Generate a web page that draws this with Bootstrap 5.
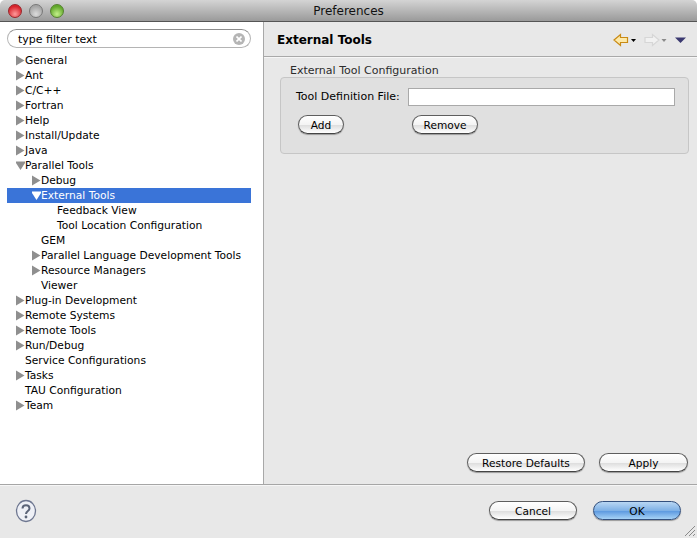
<!DOCTYPE html>
<html lang="en">
<head>
    <title>Preferences</title>
    <link rel="stylesheet" href="https://cdn.jsdelivr.net/npm/bootstrap@5.3.0/dist/css/bootstrap.min.css">
    <script src="https://cdn.jsdelivr.net/npm/bootstrap@5.3.0/dist/js/bootstrap.bundle.min.js"></script>
    <style>
        html, body { height: 538px; overflow: hidden; background: #fff; }
        body { font-family: "DejaVu Sans", sans-serif; font-size: 10.7px; color: #000; }
        .win { width: 697px; height: 538px; }
        .titlebar { height: 22px; background: linear-gradient(#d4d4d4, #9a9a9a); border-bottom: 1px solid #555; border-radius: 5px 5px 0 0; position: relative; }
        .titlebar-text { font-size: 12px; color: #111; line-height: 20px; padding-top: 1px; text-align: center; }
        .light { position: absolute; top: 4px; width: 14px; height: 14px; border-radius: 50%; border: 1px solid #777; }
        .light-red { left: 8px; background: radial-gradient(circle at 50% 75%, #ff9a9a, #d8242c 70%); border-color: #99252a; }
        .light-grey { left: 29px; background: radial-gradient(circle at 50% 75%, #dcdcdc, #a6a6a6 70%); }
        .light-green { left: 50px; background: radial-gradient(circle at 50% 75%, #c4f08a, #62a82c 70%); border-color: #55812f; }
        .main { height: 462px; }
        .left-pane { background: #fff; border-right: 1px solid #a8a8a8; box-sizing: content-box; padding: 7px 0 0 7px; width: 256px; }
        .search-box { width: 244px; height: 19px; border: 1px solid #b4b4b4; border-top-color: #8c8c8c; border-radius: 10px; padding: 1px 5px 0 10px; font-size: 11px; line-height: 17px; background: #fff; }
        .clear-x { width: 12px; height: 12px; background: #b5b5b5; border-radius: 50%; color: #fff; margin-top: -1px; }
        .tree { margin: 5px 0 0; padding: 0; list-style: none; width: 244px; }
        .tree li { height: 15px; line-height: 15px; white-space: nowrap; display: flex; align-items: center; }
        .lv0 { padding-left: 9px; }
        .lv1 { padding-left: 25px; }
        .lv2 { padding-left: 50px; }
        .tw { width: 9px; height: 11px; flex: none; display: block; }
        .tw-none { width: 9px; flex: none; }
        .tree li.sel { background: #3a74d8; color: #fff; }
        .right-pane { width: 433px; background: #e8e8e8; }
        .page-head { height: 35px; border-bottom: 1px solid #a9a9a9; box-shadow: 0 1px 0 #f6f6f6; padding: 2px 11px 0 13px; }
        .page-title { font-size: 12px; font-weight: 700; }
        .group-wrap { padding: 7px 8px 0 16px; }
        .group-label { padding-left: 10px; line-height: 13px; color: #2c2c2c; font-size: 11px; }
        .group-box { height: 77px; background: #e0e0e0; border: 1px solid #c6c6c6; border-radius: 4px; padding: 10px 13px 0 15px; }
        .field-label { width: 112px; font-size: 11px; }
        .field-input { width: 268px; height: 18px; border-radius: 0; padding: 0 3px; border: 1px solid #a9a9a9; background: #fff; }
        .mac-btn { height: 19px; padding: 0; font-size: 10.6px; line-height: 16px; color: #000; border: 1px solid #5e5e5e; border-bottom-color: #444; border-radius: 10px; background: linear-gradient(#fff 0, #f4f4f4 50%, #dcdcdc 52%, #fff 100%); box-shadow: 0 1px 1px #999; }
        .mac-btn:hover { color: #000; }
        .mac-ok { background: linear-gradient(#b9d7f3 0, #7fb1e6 50%, #5a97df 52%, #a6d2f6 100%); border-color: #33507e; }
        .btn-row { margin-top: 9px; padding-left: 2px; }
        .w-add { width: 46px; }
        .w-remove { width: 66px; margin-left: 68px; }
        .w-restore { width: 118px; }
        .w-apply { width: 89px; margin-left: 14px; }
        .w-foot { width: 88px; }
        .w-ok { margin-left: 16px; }
        .page-btns { padding: 0 9px 12px 0; }
        .footer-bar { height: 54px; background: #e8e8e8; border-top: 1px solid #a6a6a6; box-shadow: inset 0 1px 0 #f6f6f6; padding: 0 16px 2px 15px; position: relative; }
        .grip { position: absolute; right: 1px; bottom: 1px; }
    </style>
</head>
<body>
<div class="win d-flex flex-column">
    <div class="titlebar">
        <span class="light light-red"></span>
        <span class="light light-grey"></span>
        <span class="light light-green"></span>
        <div class="titlebar-text">Preferences</div>
    </div>
    <div class="main d-flex">
        <div class="left-pane">
            <div class="search-box d-flex align-items-center justify-content-between">
                <span>type filter text</span>
                <span class="clear-x d-flex align-items-center justify-content-center">
                    <svg width="6" height="6" viewBox="0 0 6 6"><path d="M0.5 0.5L5.5 5.5M5.5 0.5L0.5 5.5" stroke="#fff" stroke-width="1.6"/></svg>
                </span>
            </div>
            <ul class="tree" id="tree"></ul>
        </div>
        <div class="right-pane d-flex flex-column">
            <div class="page-head d-flex align-items-center justify-content-between">
                <span class="page-title">External Tools</span>
                <span class="d-flex align-items-center">
                    <svg width="73" height="14" viewBox="0 0 73 14">
                        <path d="M1 7L7.5 1.5V4.5H14.5V9.5H7.5V12.5Z" fill="#fde9a8" stroke="#c98a14" stroke-width="1.2"/>
                        <path d="M18 6H23L20.5 9Z" fill="#000"/>
                        <path d="M46 7L39.5 1.5V4.5H32V9.5H39.5V12.5Z" fill="#f1f1f1" stroke="#d6d6d6" stroke-width="1.2"/>
                        <path d="M48.500 6H53.500L51 9Z" fill="#8a8a8a"/>
                        <path d="M62 4.500H73L67.500 10Z" fill="#3b3970"/>
                    </svg>
                </span>
            </div>
            <div class="group-wrap flex-grow-1">
                <div class="group-label">External Tool Configuration</div>
                <div class="group-box">
                    <div class="d-flex align-items-center">
                        <span class="field-label">Tool Definition File:</span>
                        <input class="form-control field-input" type="text">
                    </div>
                    <div class="d-flex btn-row">
                        <button class="btn mac-btn w-add">Add</button>
                        <button class="btn mac-btn w-remove">Remove</button>
                    </div>
                </div>
            </div>
            <div class="d-flex justify-content-end page-btns">
                <button class="btn mac-btn w-restore">Restore Defaults</button>
                <button class="btn mac-btn w-apply">Apply</button>
            </div>
        </div>
    </div>
    <div class="footer-bar d-flex align-items-center justify-content-between">
        <svg width="22" height="24" viewBox="0 0 22 24">
            <ellipse cx="11" cy="12" rx="9.500" ry="10.500" fill="#eef0f6" stroke="#6d7690" stroke-width="1.300"/>
            <path d="M7.500 9.500C7.500 5 14.500 5 14.500 9.500C14.500 12 11 12 11 15" fill="none" stroke="#5b6478" stroke-width="2"/>
            <circle cx="11" cy="18" r="1.400" fill="#5b6478"/>
        </svg>
        <div class="d-flex">
            <button class="btn mac-btn w-foot">Cancel</button>
            <button class="btn mac-btn mac-ok w-foot w-ok">OK</button>
        </div>
        <svg class="grip" width="12" height="12" viewBox="0 0 12 12"><path d="M1 11L11 1M5 11L11 5M9 11L11 9" stroke="#8a8a8a" fill="none"/></svg>
    </div>
</div>
<script>
    // level, state (c closed, o open, n leaf), label
    const rows = [
        [0,'c','General'],[0,'c','Ant'],[0,'c','C/C++'],[0,'c','Fortran'],[0,'c','Help'],
        [0,'c','Install/Update'],[0,'c','Java'],[0,'o','Parallel Tools'],[1,'c','Debug'],
        [1,'o','External Tools',true],[2,'n','Feedback View'],[2,'n','Tool Location Configuration'],
        [1,'n','GEM'],[1,'c','Parallel Language Development Tools'],[1,'c','Resource Managers'],
        [1,'n','Viewer'],[0,'c','Plug-in Development'],[0,'c','Remote Systems'],[0,'c','Remote Tools'],
        [0,'c','Run/Debug'],[0,'n','Service Configurations'],[0,'c','Tasks'],[0,'n','TAU Configuration'],[0,'c','Team']
    ];
    const tree = document.getElementById('tree');
    rows.forEach(r => {
        const li = document.createElement('li');
        li.className = 'lv' + r[0] + (r[3] ? ' sel' : '');
        const fill = r[3] ? '#fff' : '#8f8f8f';
        let tw = '';
        if (r[1] === 'c') tw = '<svg class="tw" viewBox="0 0 9 11"><path d="M0 0.5L8.500 5.500L0 10.500Z" fill="' + fill + '"/></svg>';
        else if (r[1] === 'o') tw = '<svg class="tw" viewBox="0 0 9 11"><path d="M-1 1.500H10L4.500 10Z" fill="' + fill + '"/></svg>';
        else if (r[0] < 2) tw = '<span class="tw-none"></span>';
        li.innerHTML = tw + '<span>' + r[2] + '</span>';
        tree.appendChild(li);
    });
</script>
</body>
</html>
